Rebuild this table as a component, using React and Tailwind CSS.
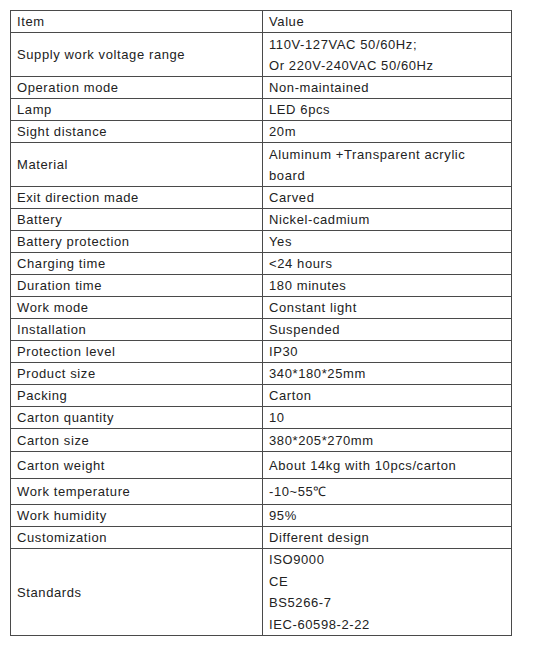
import React from 'react';

const rows = [
  { item: 'Item', value: ['Value'], h: 'h-[22px]' },
  { item: 'Supply work voltage range', value: ['110V-127VAC 50/60Hz;', 'Or 220V-240VAC 50/60Hz'], h: 'h-[44px]' },
  { item: 'Operation mode', value: ['Non-maintained'], h: 'h-[22px]' },
  { item: 'Lamp', value: ['LED 6pcs'], h: 'h-[22px]' },
  { item: 'Sight distance', value: ['20m'], h: 'h-[22px]' },
  { item: 'Material', value: ['Aluminum +Transparent acrylic', 'board'], h: 'h-[44px]' },
  { item: 'Exit direction made', value: ['Carved'], h: 'h-[22px]' },
  { item: 'Battery', value: ['Nickel-cadmium'], h: 'h-[22px]' },
  { item: 'Battery protection', value: ['Yes'], h: 'h-[22px]' },
  { item: 'Charging time', value: ['<24 hours'], h: 'h-[22px]' },
  { item: 'Duration time', value: ['180 minutes'], h: 'h-[22px]' },
  { item: 'Work mode', value: ['Constant light'], h: 'h-[22px]' },
  { item: 'Installation', value: ['Suspended'], h: 'h-[22px]' },
  { item: 'Protection level', value: ['IP30'], h: 'h-[22px]' },
  { item: 'Product size', value: ['340*180*25mm'], h: 'h-[22px]' },
  { item: 'Packing', value: ['Carton'], h: 'h-[22px]' },
  { item: 'Carton quantity', value: ['10'], h: 'h-[22px]' },
  { item: 'Carton size', value: ['380*205*270mm'], h: 'h-[23px]' },
  { item: 'Carton weight', value: ['About 14kg with 10pcs/carton'], h: 'h-[27px]' },
  { item: 'Work temperature', value: ['-10~55℃'], h: 'h-[26px]' },
  { item: 'Work humidity', value: ['95%'], h: 'h-[22px]' },
  { item: 'Customization', value: ['Different design'], h: 'h-[22px]' },
  { item: 'Standards', value: ['ISO9000', 'CE', 'BS5266-7', 'IEC-60598-2-22'], h: 'h-[87px]' },
];

export default function App() {
  return (
    <div className="min-h-[654px] bg-white pt-[10px] pl-[10px] font-['Liberation_Sans',Arial,sans-serif] text-[13px] tracking-[0.6px] text-[#222]">
      <table className="w-[502px] border-collapse border border-[#4a4a4a]">
        <tbody>
          {rows.map(r => (
            <tr key={r.item} className={r.h}>
              <td className="w-[252px] border border-[#4a4a4a] px-[6px] py-0 align-middle leading-[21px]">
                {r.item}
              </td>
              <td className="border border-[#4a4a4a] px-[6px] py-0 align-middle leading-[21px]">
                {r.value.map(v => (
                  <div key={v} className={r.value.length > 2 ? 'leading-[21.5px]' : ''}>{v}</div>
                ))}
              </td>
            </tr>
          ))}
        </tbody>
      </table>
    </div>
  );
}
